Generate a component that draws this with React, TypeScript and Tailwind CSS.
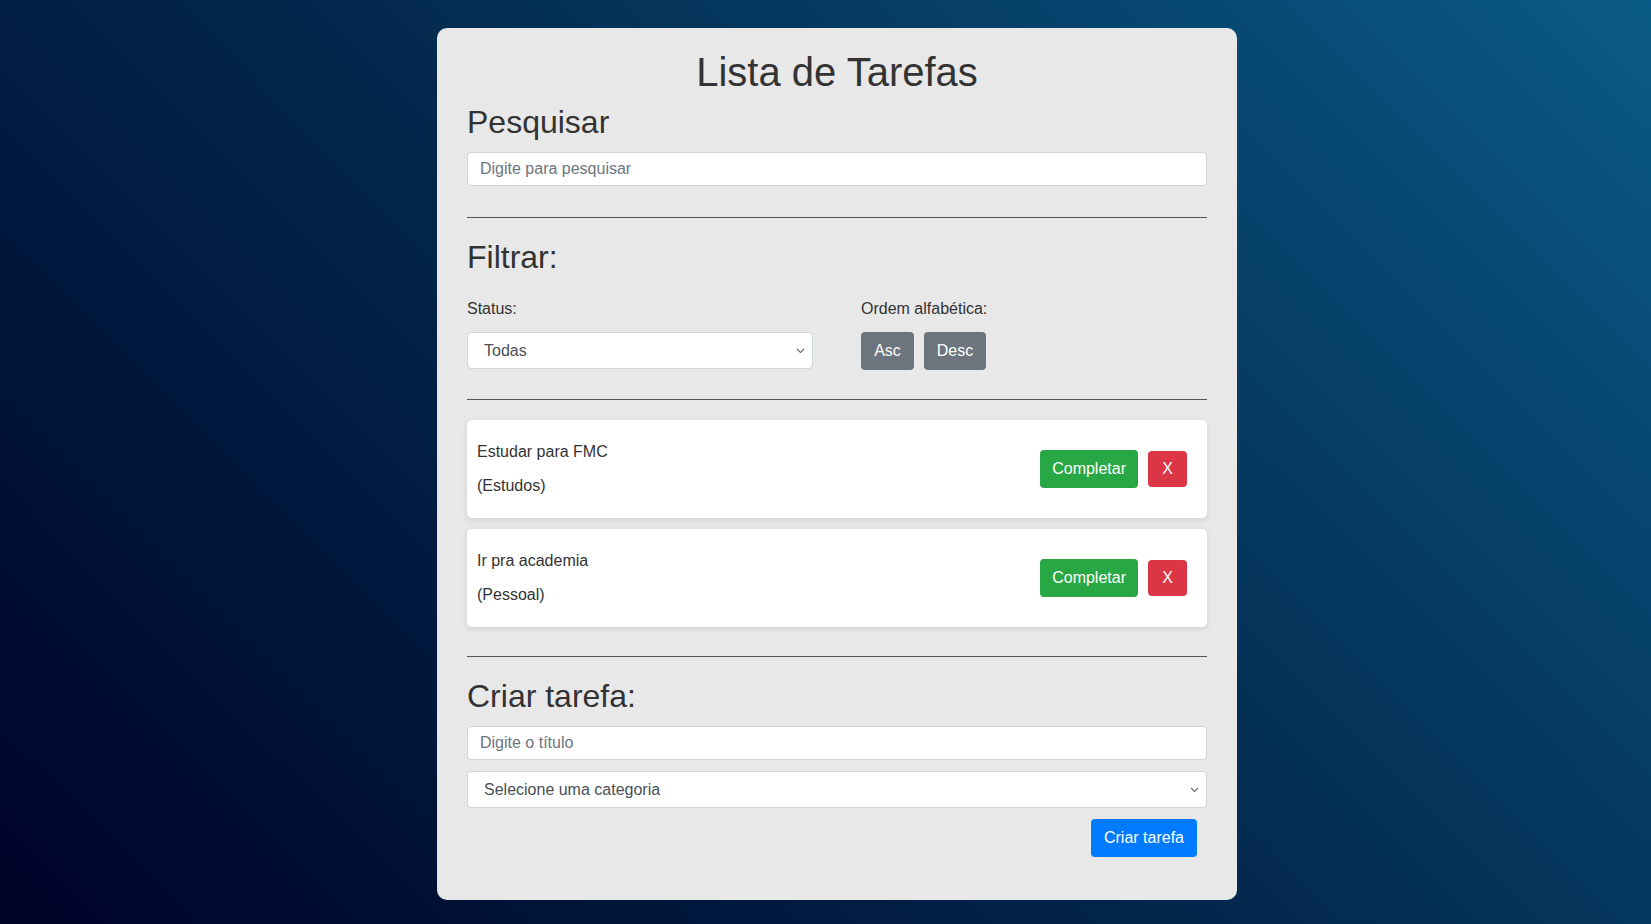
import { useState } from "react"

const tasks = [
  { id: 1, title: "Estudar para FMC", category: "Estudos" },
  { id: 2, title: "Ir pra academia", category: "Pessoal" },
]

const Chevron = () => (
  <svg
    className="pointer-events-none absolute right-[8px] top-1/2 -translate-y-1/2"
    width="9"
    height="6"
    viewBox="0 0 9 6"
    fill="none"
  >
    <path d="M1 1l3.5 3.5L8 1" stroke="#6b6b6b" strokeWidth="1.1" />
  </svg>
)

const Divider = ({ className }: { className: string }) => <div className={`h-px bg-[#555] ${className}`} />

export default function App() {
  const [search, setSearch] = useState("")
  const [title, setTitle] = useState("")

  return (
    <div
      className="flex min-h-screen justify-center bg-linear-45 from-[#000428] via-[#04294e] to-[#0a5b87] pt-[28px] pb-[25px] pl-[23px]"
      style={{ fontFamily: '"Liberation Sans", Arial, sans-serif' }}
    >
      <div className="h-fit w-[800px] rounded-[10px] bg-[#e8e8e8] px-[30px] pt-[20px] pb-[43px] text-[#333]">
        <h1 className="text-center text-[40px] leading-[48px]">Lista de Tarefas</h1>

        <h2 className="mt-[7px] text-[32px] leading-[38px]">Pesquisar</h2>
        <input
          value={search}
          onChange={(e) => setSearch(e.target.value)}
          placeholder="Digite para pesquisar"
          className="mt-[11px] block h-[34px] w-full rounded-[4px] border border-[#ced4da] bg-white px-[12px] text-[16px] text-[#495057] outline-none placeholder:text-[#6c757d]"
        />

        <Divider className="mt-[31px]" />

        <h2 className="mt-[20px] text-[32px] leading-[38px]">Filtrar:</h2>
        <div className="mt-[21px] grid grid-cols-2 gap-x-[48px]">
          <div>
            <label className="block text-[16px] leading-[24px]">Status:</label>
            <div className="relative mt-[11px]">
              <select className="block h-[37px] w-full appearance-none rounded-[4px] border border-[#ced4da] bg-white px-[16px] text-[16px] text-[#495057] outline-none">
                <option>Todas</option>
                <option>Completas</option>
                <option>Incompletas</option>
              </select>
              <Chevron />
            </div>
          </div>
          <div>
            <p className="text-[16px] leading-[24px]">Ordem alfabética:</p>
            <div className="mt-[11px] flex gap-[10px]">
              <button className="h-[38px] w-[53px] rounded-[4px] bg-[#6c757d] text-[16px] text-white">Asc</button>
              <button className="h-[38px] w-[62px] rounded-[4px] bg-[#6c757d] text-[16px] text-white">Desc</button>
            </div>
          </div>
        </div>

        <Divider className="mt-[29px]" />

        <div className="mt-[20px] flex flex-col gap-[11px]">
          {tasks.map((task) => (
            <div
              key={task.id}
              className="flex items-center justify-between rounded-[5px] bg-white py-[20px] pl-[10px] pr-[20px] shadow-[0_2px_6px_rgba(0,0,0,0.1)]"
            >
              <div className="flex flex-col gap-[10px] text-[16px] leading-[24px]">
                <p>{task.title}</p>
                <p>({task.category})</p>
              </div>
              <div className="flex items-center gap-[10px]">
                <button className="h-[38px] rounded-[4px] bg-[#28a745] px-[12px] text-[16px] text-white">Completar</button>
                <button className="h-[36px] w-[39px] rounded-[4px] bg-[#dc3545] text-[16px] text-white">X</button>
              </div>
            </div>
          ))}
        </div>

        <Divider className="mt-[29px]" />

        <h2 className="mt-[20px] text-[32px] leading-[38px]">Criar tarefa:</h2>
        <input
          value={title}
          onChange={(e) => setTitle(e.target.value)}
          placeholder="Digite o título"
          className="mt-[11px] block h-[34px] w-full rounded-[4px] border border-[#ced4da] bg-white px-[12px] text-[16px] text-[#495057] outline-none placeholder:text-[#6c757d]"
        />
        <div className="relative mt-[11px]">
          <select className="block h-[37px] w-full appearance-none rounded-[4px] border border-[#ced4da] bg-white px-[16px] text-[16px] text-[#495057] outline-none">
            <option>Selecione uma categoria</option>
            <option>Trabalho</option>
            <option>Pessoal</option>
            <option>Estudos</option>
          </select>
          <Chevron />
        </div>
        <div className="mt-[11px] flex justify-end pr-[10px]">
          <button className="h-[38px] rounded-[4px] bg-[#007bff] px-[13px] text-[16px] text-white">Criar tarefa</button>
        </div>
      </div>
    </div>
  )
}
